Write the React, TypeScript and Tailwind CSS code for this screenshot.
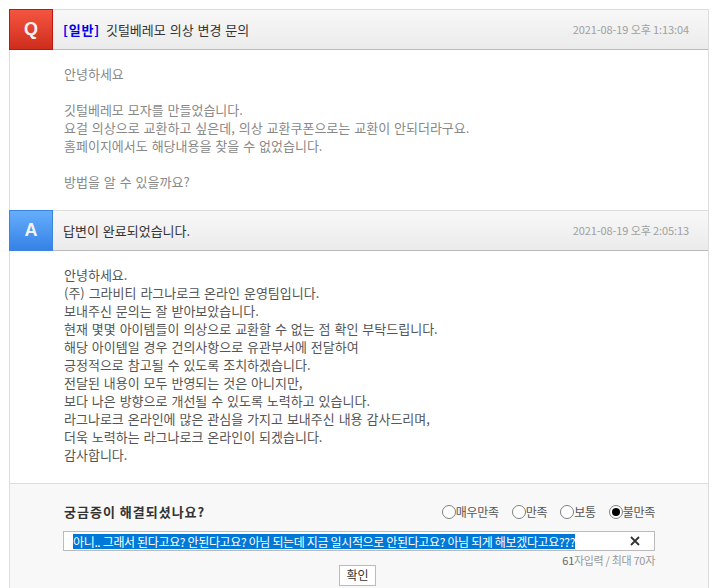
// App.tsx
const question = [
  "안녕하세요",
  "",
  "깃털베레모 모자를 만들었습니다.",
  "요걸 의상으로 교환하고 싶은데, 의상 교환쿠폰으로는 교환이 안되더라구요.",
  "홈페이지에서도 해당내용을 찾을 수 없었습니다.",
  "",
  "방법을 알 수 있을까요?",
];

const answer = [
  "안녕하세요.",
  "(주) 그라비티 라그나로크 온라인 운영팀입니다.",
  "보내주신 문의는 잘 받아보았습니다.",
  "현재 몇몇 아이템들이 의상으로 교환할 수 없는 점 확인 부탁드립니다.",
  "해당 아이템일 경우 건의사항으로 유관부서에 전달하여",
  "긍정적으로 참고될 수 있도록 조치하겠습니다.",
  "전달된 내용이 모두 반영되는 것은 아니지만,",
  "보다 나은 방향으로 개선될 수 있도록 노력하고 있습니다.",
  "라그나로크 온라인에 많은 관심을 가지고 보내주신 내용 감사드리며,",
  "더욱 노력하는 라그나로크 온라인이 되겠습니다.",
  "감사합니다.",
];

const ratings = [
  { label: "매우만족", checked: false },
  { label: "만족", checked: false },
  { label: "보통", checked: false },
  { label: "불만족", checked: true },
];

function Lines({ lines, className }: { lines: string[]; className: string }) {
  return (
    <div className={className}>
      {lines.map((line, i) => (
        <p key={i} className="h-[18px] leading-[18px] whitespace-pre">
          {line}
        </p>
      ))}
    </div>
  );
}

function Radio({ checked }: { checked: boolean }) {
  return (
    <span className="flex h-[14px] w-[14px] shrink-0 items-center justify-center rounded-full border border-[#808080] bg-white">
      {checked && <span className="h-[8px] w-[8px] rounded-full bg-black" />}
    </span>
  );
}

function RowHeader({
  badge,
  badgeClass,
  date,
  children,
}: {
  badge: string;
  badgeClass: string;
  date: string;
  children: React.ReactNode;
}) {
  return (
    <div className="flex h-[40px] border-b border-[#bbbbbb] bg-gradient-to-b from-[#f8f8f8] to-[#ebebeb]">
      <div
        className={`-mt-px flex h-[41px] w-[44px] shrink-0 items-center justify-center font-['Liberation_Sans',sans-serif] text-[18px] font-bold text-[#f2f2f2] ${badgeClass}`}
      >
        {badge}
      </div>
      <div className="flex flex-1 items-center pl-[10px] text-[13px] text-[#333333] [word-spacing:1px]">{children}</div>
      <div className="flex items-center pr-[19px] text-[11px] tracking-[-0.1px] text-[#a0a0a0]">{date}</div>
    </div>
  );
}

export default function App() {
  return (
    <div className="h-[588px] w-[712px] overflow-hidden bg-white pl-[9px] pt-[9px] font-['Noto_Sans_CJK_KR',sans-serif]">
      <div className="w-[700px] border-x border-t border-[#dddddd]">
        <RowHeader
          badge="Q"
          badgeClass="border border-[#c4140c] bg-gradient-to-b from-[#f4553f] to-[#cf2c1c] -ml-px"
          date="2021-08-19 오후 1:13:04"
        >
          <span className="mr-[6px] font-bold tracking-[0.8px] text-[#0000ee]">[일반]</span>
          깃털베레모 의상 변경 문의
        </RowHeader>
        <Lines lines={question} className="h-[160px] pl-[54px] pt-[15px] text-[13px] text-[#888888] [word-spacing:1px]" />

        <div className="border-t border-[#dddddd]">
          <RowHeader
            badge="A"
            badgeClass="border border-[#3a85e0] bg-gradient-to-b from-[#66adfb] to-[#3582e6] -ml-px"
            date="2021-08-19 오후 2:05:13"
          >
            답변이 완료되었습니다.
          </RowHeader>
        </div>
        <Lines lines={answer} className="h-[232px] pl-[54px] pt-[15px] text-[13px] text-[#555555] [word-spacing:1px]" />

        <div className="h-[110px] border-t border-[#dddddd] bg-[#f8f8f8] px-[53px] pt-[19px]">
          <div className="flex h-[18px] items-center justify-between">
            <strong className="pl-px text-[13px] font-bold tracking-[1px] text-[#333333]">궁금증이 해결되셨나요?</strong>
            <div className="flex items-center gap-[13px] text-[12px] tracking-[-0.3px] text-[#555555]">
              {ratings.map((r) => (
                <label key={r.label} className="flex items-center">
                  <Radio checked={r.checked} />
                  {r.label}
                </label>
              ))}
            </div>
          </div>
          <div className="mt-[10px] flex h-[20px] w-[592px] items-center border border-[#bbbbbb] bg-white pl-[9px] pr-[14px] text-[12px]">
            <span className="bg-[#0078d7] leading-[15px] tracking-[-0.35px] whitespace-pre text-white">
              아니.. 그래서 된다고요? 안된다고요? 아님 되는데 지금 일시적으로 안된다고요? 아님 되게 해보겠다고요???
            </span>
            <svg className="ml-auto h-[10px] w-[10px] text-[#333333]" viewBox="0 0 10 10" fill="none" stroke="currentColor" strokeWidth="1.8">
              <path d="M1 1l8 8M9 1l-8 8" />
            </svg>
          </div>
          <p className="mt-[1px] w-[592px] text-right text-[11px] leading-[16px] tracking-[-0.3px] text-[#999999]">
            <span className="text-[#666666]">61</span>자입력 / 최대 70자
          </p>
          <div className="-mt-[7px] pl-[276px]">
            <button className="h-[21px] w-[37px] border border-[#bbbbbb] bg-white text-[12px] leading-none text-[#333333]">확인</button>
          </div>
        </div>
      </div>
    </div>
  );
}
